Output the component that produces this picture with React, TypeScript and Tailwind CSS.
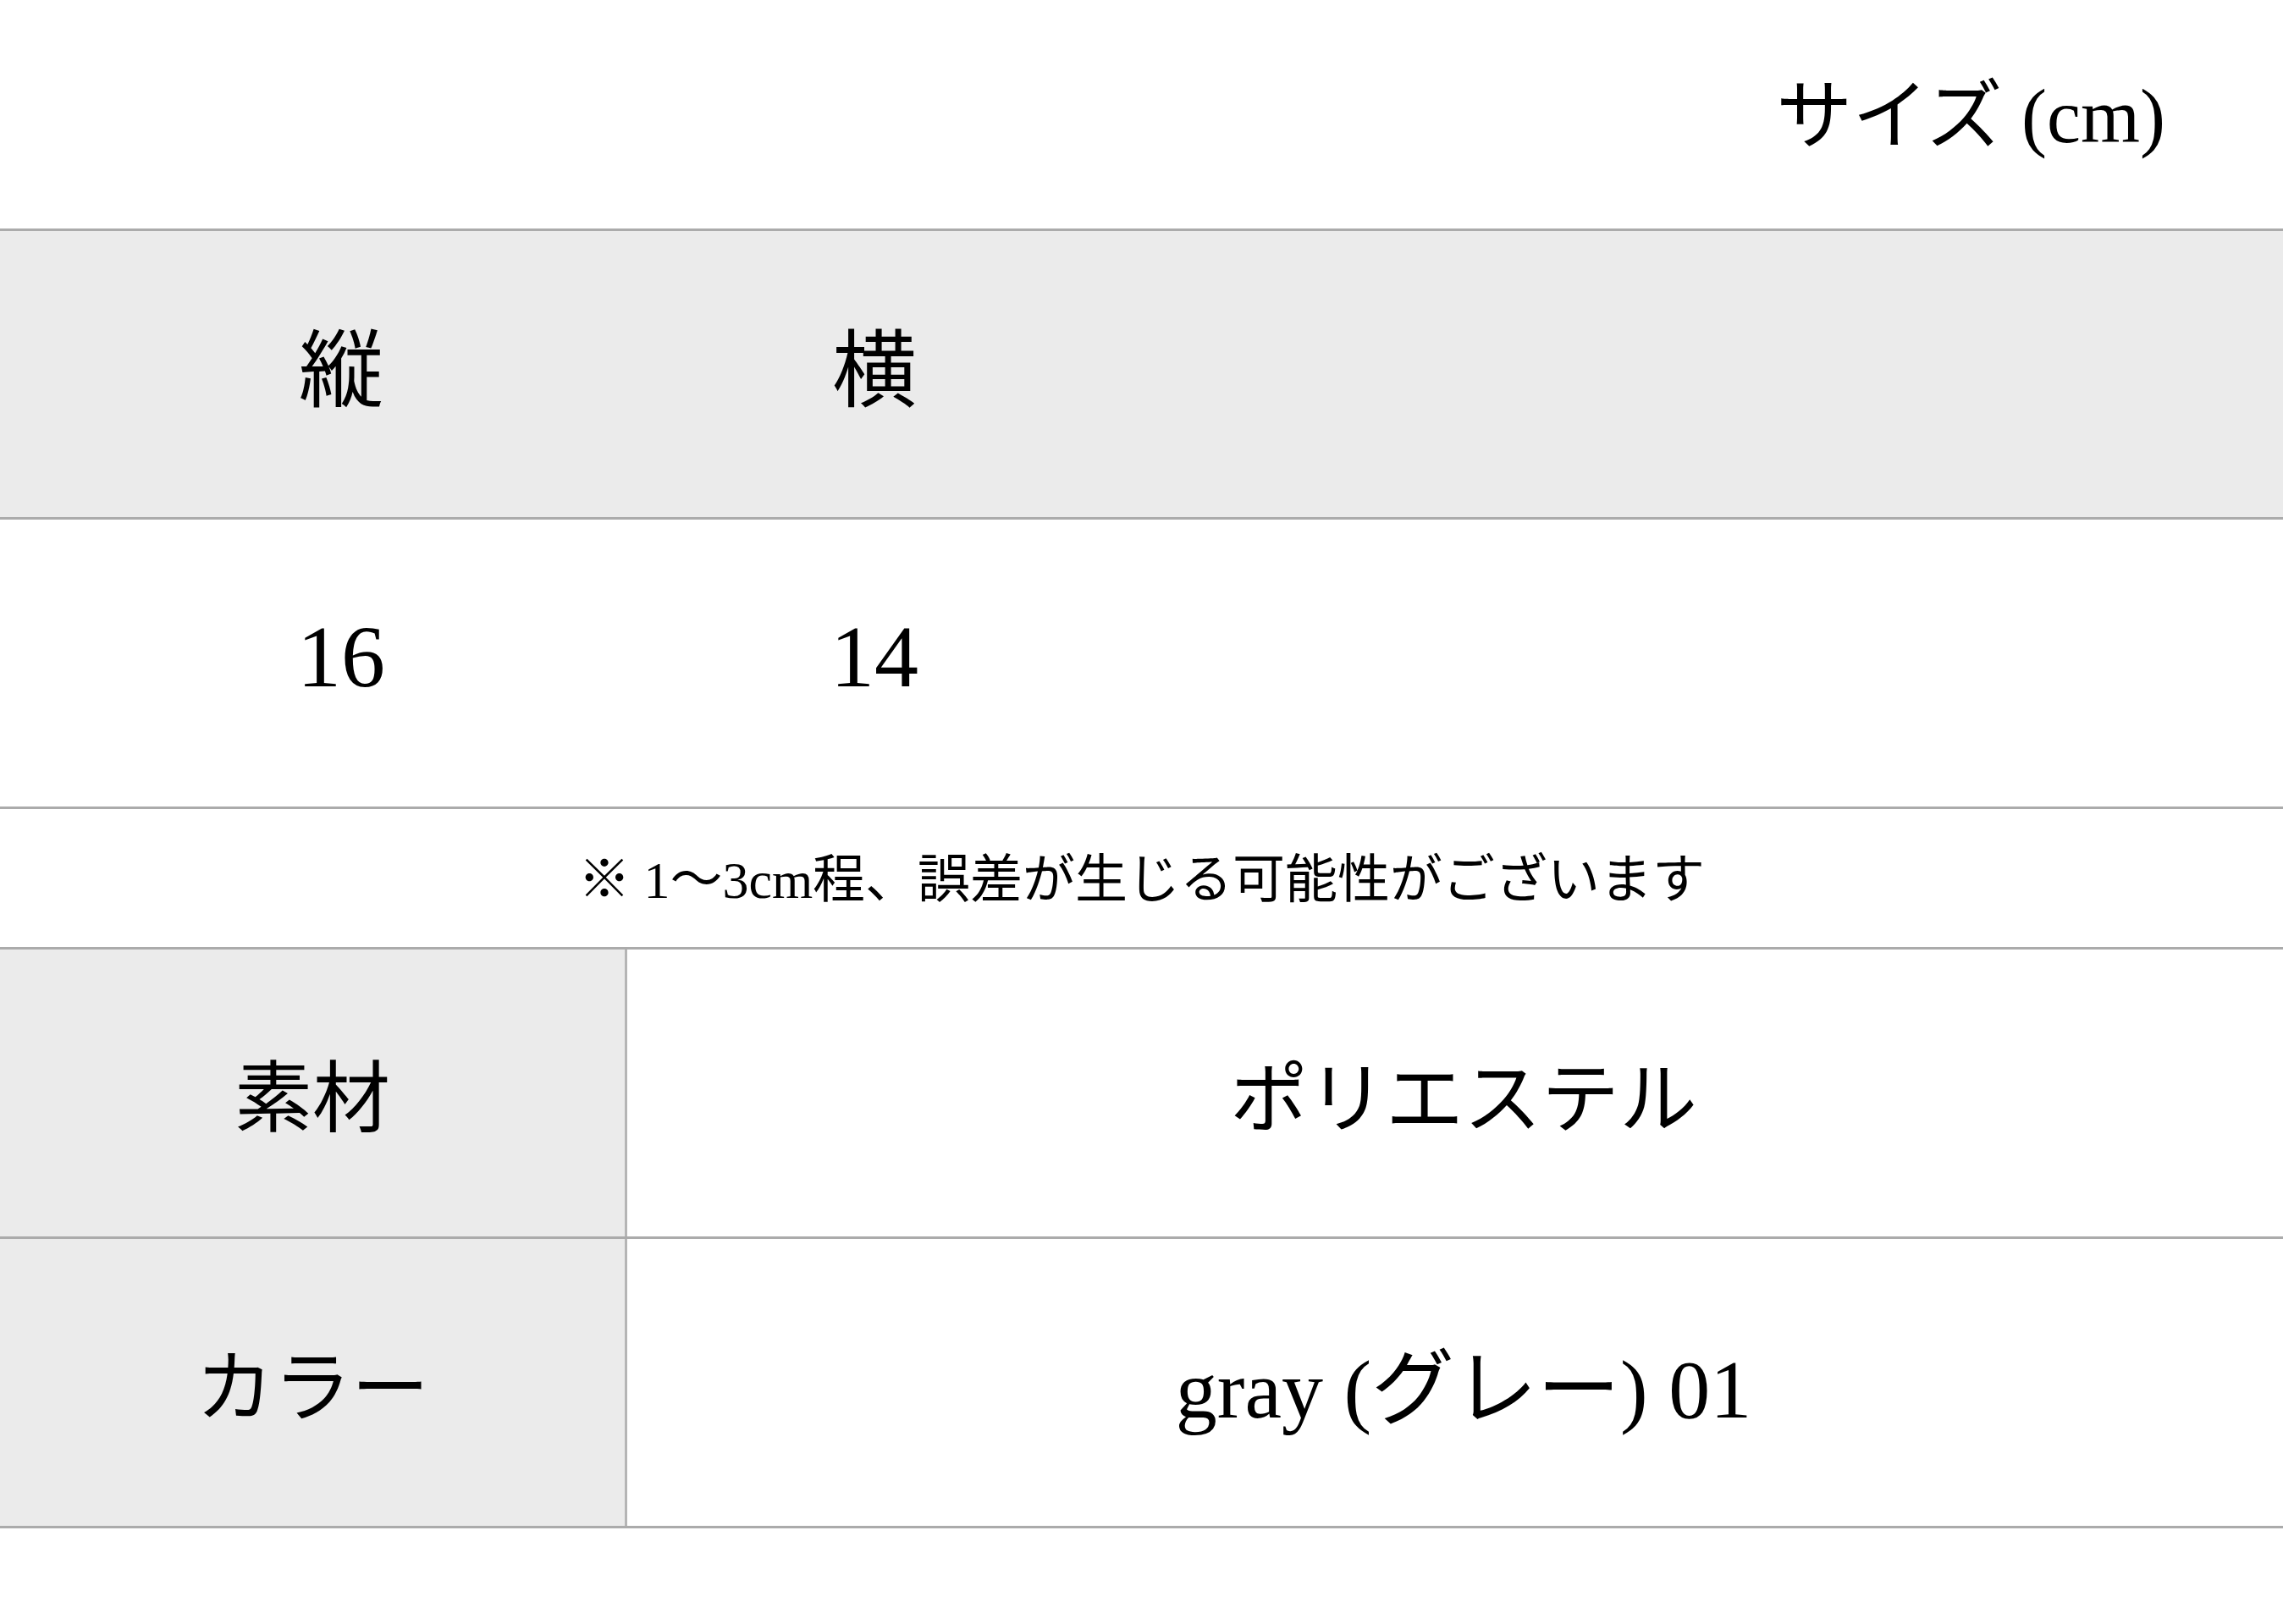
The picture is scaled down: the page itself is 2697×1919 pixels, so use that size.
const font = {
  fontFamily: '"Liberation Serif", "Noto Sans CJK JP", serif',
};

const sizes = [
  { label: "縦", value: "16" },
  { label: "横", value: "14" },
];

const specs = [
  { label: "素材", value: "ポリエステル", size: "text-[92px]" },
  { label: "カラー", value: "gray (グレー) 01", size: "text-[98px]" },
];

export default function App() {
  return (
    <div
      className="w-[2697px] h-[1919px] bg-white text-black"
      style={font}
    >
      <div className="h-[270px] flex items-center justify-end pr-[139px] pt-[6px]">
        <h2 className="text-[90px] leading-none font-normal">サイズ (cm)</h2>
      </div>

      <div className="border-t-[3px] border-[#ababab] bg-[#ebebeb] h-[341px] flex items-center pl-[88px] pb-[4px]">
        {sizes.map((s) => (
          <div key={s.label} className="w-[630px] text-center text-[100px] leading-none">
            {s.label}
          </div>
        ))}
      </div>

      <div className="border-t-[3px] border-[#ababab] h-[342px] flex items-center pl-[88px] pb-[16px]">
        {sizes.map((s) => (
          <div key={s.label} className="w-[630px] text-center text-[104px] leading-none">
            {s.value}
          </div>
        ))}
      </div>

      <div className="border-t-[3px] border-[#ababab] h-[166px] flex items-center justify-center pt-[4px]">
        <p className="text-[62px] leading-none">※ 1〜3cm程、誤差が生じる可能性がございます</p>
      </div>

      {specs.map((s) => (
        <div key={s.label} className="border-t-[3px] border-[#ababab] h-[342px] flex">
          <div className="w-[741px] bg-[#ebebeb] border-r-[3px] border-[#b5b5b5] flex items-center justify-center text-[92px] leading-none pt-[14px]">
            {s.label}
          </div>
          <div className={`flex-1 flex items-center justify-center leading-none pl-[20px] pt-[16px] ${s.size}`}>
            {s.value}
          </div>
        </div>
      ))}
      <div className="border-t-[3px] border-[#ababab]" />
    </div>
  );
}
